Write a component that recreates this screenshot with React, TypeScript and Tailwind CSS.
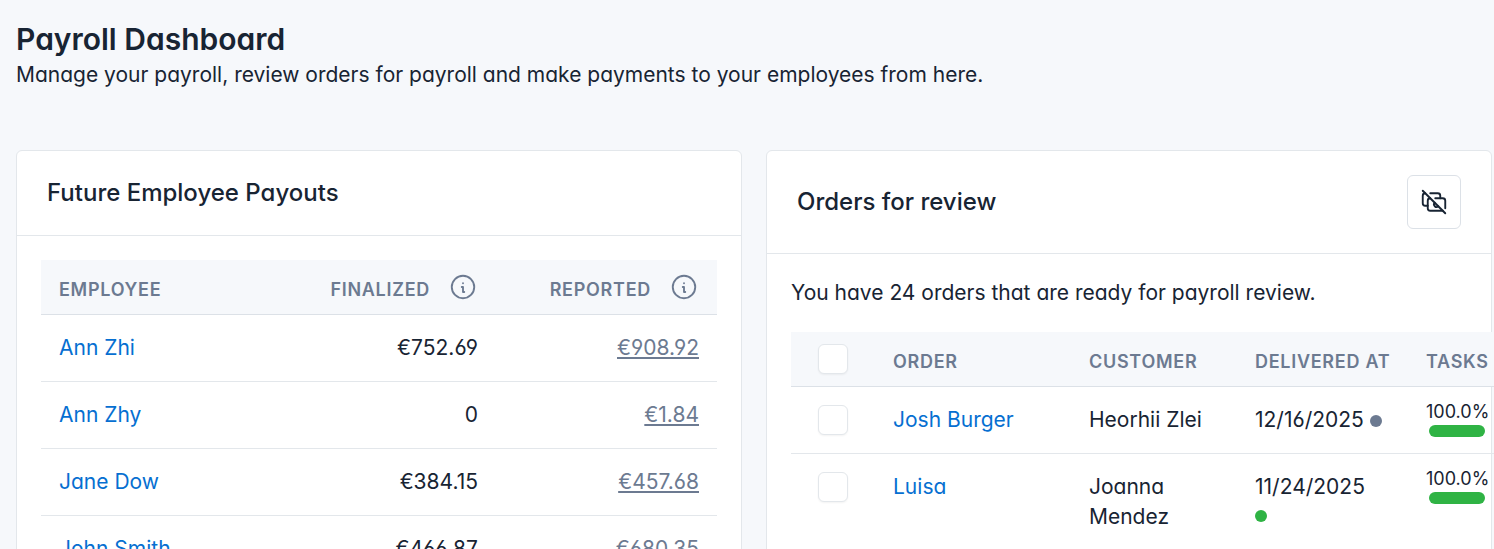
import type { ReactNode } from "react";
import { TbCashOff, TbInfoCircle } from "react-icons/tb";

const payouts = [
  { name: "Ann Zhi", finalized: "€752.69", reported: "€908.92" },
  { name: "Ann Zhy", finalized: "0", reported: "€1.84" },
  { name: "Jane Dow", finalized: "€384.15", reported: "€457.68" },
  { name: "John Smith", finalized: "€466.87", reported: "€680.35" },
];

const orders = [
  { order: "Josh Burger", customer: "Heorhii Zlei", date: "12/16/2025", dot: "inline-block bg-[#6c7a91]", tasks: 100 },
  { order: "Luisa", customer: "Joanna Mendez", date: "11/24/2025", dot: "mt-2 block bg-[#2fb344]", tasks: 100 },
];

const Card = ({ title, action, children }: { title: string; action?: ReactNode; children: ReactNode }) => (
  <section className="min-w-0 flex-1 rounded-md border border-[#e3e7eb] bg-white">
    <div className="flex items-center justify-between border-b border-[#e3e7eb] px-[30px] py-6">
      <h2 className="text-2xl leading-9 font-medium">{title}</h2>
      {action}
    </div>
    <div className="p-6">{children}</div>
  </section>
);

const InfoHeading = ({ label }: { label: string }) => (
  <div className="flex justify-end gap-[18px]">
    <span className="pt-1.5 leading-6">{label}</span>
    <button type="button" aria-label={`About ${label}`}>
      <TbInfoCircle className="size-[30px] stroke-[1.5]" />
    </button>
  </div>
);

const Checkbox = ({ label }: { label: string }) => (
  <input
    type="checkbox"
    aria-label={label}
    className="mx-auto block size-[30px] appearance-none rounded-md border border-[#e3e7eb] bg-white shadow-xs checked:bg-[#066fd1]"
  />
);

const PayoutsTable = () => (
  <table className="w-full table-fixed">
    <thead>
      <tr className="border-b border-[#dce1e7] bg-[#f6f8fb] text-lg leading-[30px] tracking-[0.04em] text-[#6c7a91] uppercase">
        <th className="px-[18px] pt-[15px] pb-[9px] text-left font-semibold">Employee</th>
        <th className="px-[18px] py-3 font-semibold">
          <InfoHeading label="Finalized" />
        </th>
        <th className="w-[221px] px-[18px] py-3 font-semibold">
          <InfoHeading label="Reported" />
        </th>
      </tr>
    </thead>
    <tbody>
      {payouts.map((row) => (
        <tr key={row.name} className="border-b border-[#e3e7eb]">
          <td className="p-[18px]">
            <a href="#employee" className="text-[#066fd1]">{row.name}</a>
          </td>
          <td className="p-[18px] text-right">{row.finalized}</td>
          <td className="p-[18px] text-right">
            <a href="#reported" className="text-[#6c7a91] underline">{row.reported}</a>
          </td>
        </tr>
      ))}
    </tbody>
  </table>
);

const OrdersTable = () => (
  <table className="w-[714px] table-fixed">
    <colgroup>
      <col className="w-[84px]" />
      <col className="w-[196px]" />
      <col className="w-[166px]" />
      <col className="w-[171px]" />
      <col className="w-[97px]" />
    </colgroup>
    <thead>
      <tr className="border-b border-[#dce1e7] bg-[#f6f8fb] text-left text-lg leading-[30px] tracking-[0.04em] text-[#6c7a91] uppercase">
        <th className="py-3">
          <Checkbox label="Select all orders" />
        </th>
        <th className="px-[18px] pt-[15px] pb-[9px] font-semibold">Order</th>
        <th className="px-[18px] pt-[15px] pb-[9px] font-semibold">Customer</th>
        <th className="pt-[15px] pb-[9px] pl-[18px] font-semibold whitespace-nowrap">Delivered at</th>
        <th className="px-[18px] pt-[15px] pb-[9px] font-semibold">Tasks</th>
      </tr>
    </thead>
    <tbody>
      {orders.map((row) => (
        <tr key={row.order} className="border-b border-[#e3e7eb] align-top">
          <td className="py-[18px]">
            <Checkbox label={`Select ${row.order}`} />
          </td>
          <td className="p-[18px]">
            <a href="#order" className="text-[#066fd1]">{row.order}</a>
          </td>
          <td className="p-[18px]">{row.customer}</td>
          <td className="p-[18px]">
            {row.date} <span className={`size-3 rounded-full ${row.dot}`} />
          </td>
          <td className="px-[18px] pt-3 text-center text-lg leading-[26px]">
            {row.tasks.toFixed(1)}%
            <div className="mx-auto h-3 w-14 overflow-hidden rounded-full bg-[#e3e7eb]">
              <div className="h-full bg-[#2fb344]" style={{ width: `${row.tasks}%` }} />
            </div>
          </td>
        </tr>
      ))}
    </tbody>
  </table>
);

const App = () => {
  return (
    <main className="h-screen overflow-hidden bg-[#f6f8fb] pt-[18px] pr-0.5 pl-4 font-['Inter',sans-serif] text-[21px] leading-[30px] text-[#182433] [font-feature-settings:'cv03','cv04','cv11']">
      <header className="mb-[60px]">
        <h1 className="text-3xl leading-[42px] font-semibold">Payroll Dashboard</h1>
        <p>Manage your payroll, review orders for payroll and make payments to your employees from here.</p>
      </header>

      <div className="flex items-start gap-6">
        <Card title="Future Employee Payouts">
          <PayoutsTable />
        </Card>

        <Card
          title="Orders for review"
          action={
            <button
              type="button"
              aria-label="Mark as not payable"
              className="flex size-[54px] items-center justify-center rounded-md border border-[#dce1e7] bg-white"
            >
              <TbCashOff className="size-[30px] stroke-[1.5]" />
            </button>
          }
        >
          <p className="mb-6">You have 24 orders that are ready for payroll review.</p>
          <OrdersTable />
        </Card>
      </div>
    </main>
  );
};

export default App;
